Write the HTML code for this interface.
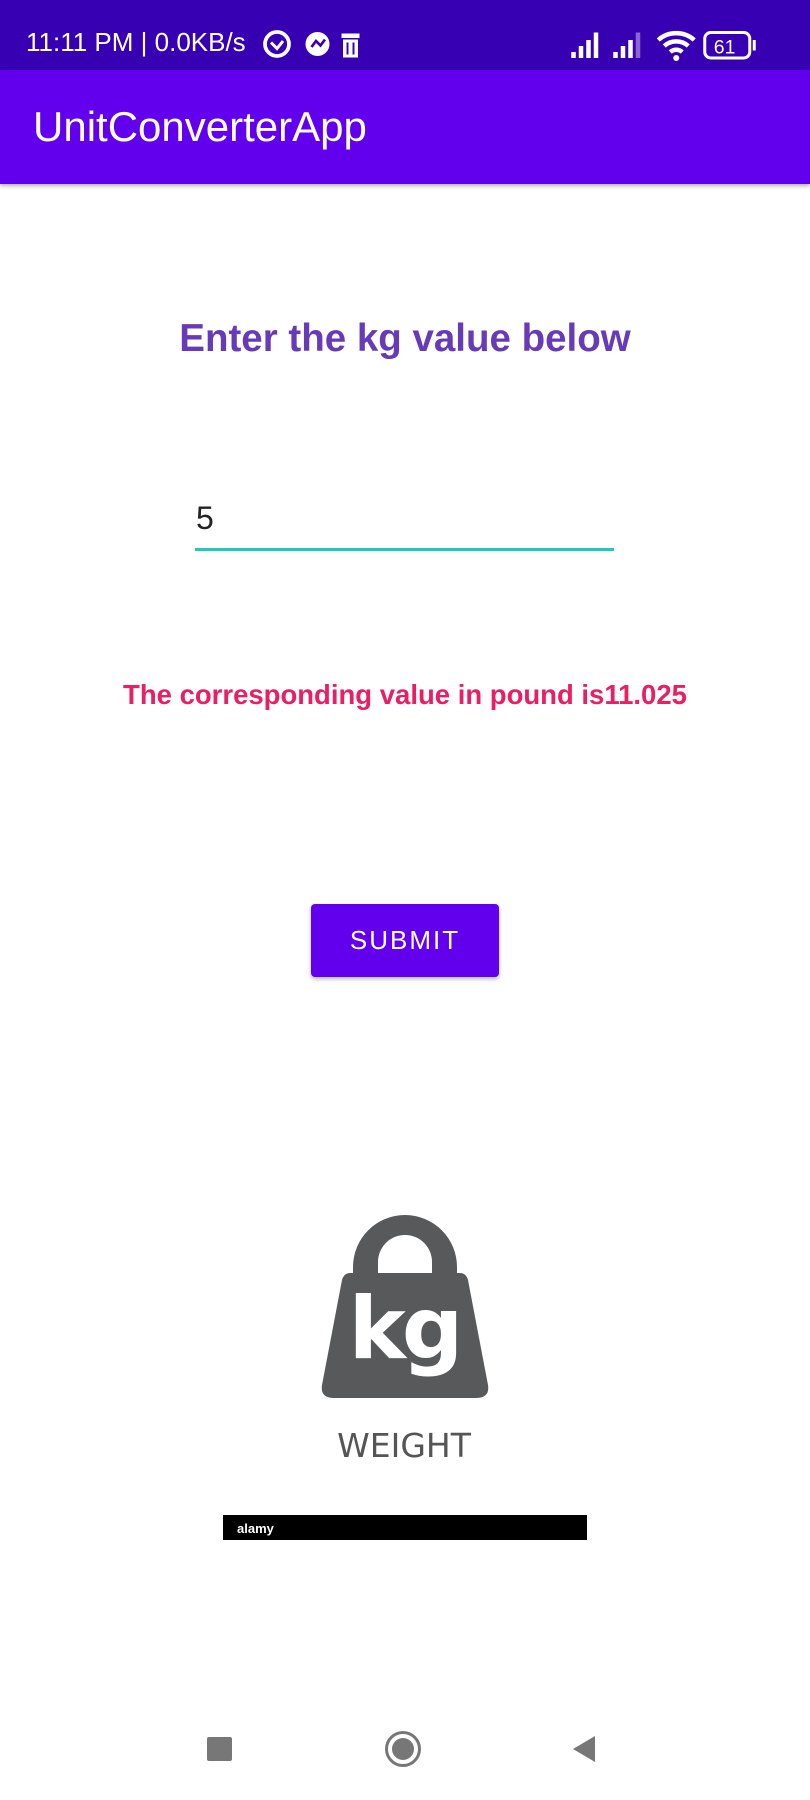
<!DOCTYPE html>
<html><head><meta charset="utf-8"><style>
body{margin:0;width:810px;height:1800px;position:relative;background:#fff;font-family:"Liberation Sans",sans-serif;overflow:hidden}
.a{position:absolute}
</style></head><body>
<div class="a" style="left:0;top:0;width:810px;height:70px;background:#3700b3"></div>
<div class="a" style="left:26px;top:27px;color:#fff;font-size:26px;white-space:nowrap">11:11 PM | 0.0KB/s</div>
<svg class="a" style="left:262px;top:20px" width="105" height="45" viewBox="0 0 70 30">
<circle cx="10" cy="16" r="8" fill="none" stroke="#fff" stroke-width="2.5"/><path d="M6 15l4 4 4-5" stroke="#fff" stroke-width="2" fill="none"/>
<circle cx="37" cy="16" r="8" fill="#fff"/><path d="M33 18l3-4 3 3 3-4" stroke="#3700b3" stroke-width="1.8" fill="none"/>
<rect x="53" y="9" width="12" height="3" fill="#fff"/><rect x="54" y="13" width="10" height="12" fill="#fff"/><path d="M57 15v8M61 15v8" stroke="#3700b3" stroke-width="1.3"/>
</svg>
<svg class="a" style="left:568px;top:22px" width="200" height="45" viewBox="0 0 133 30">
<g fill="#fff"><rect x="2" y="20" width="3" height="4"/><rect x="7" y="16" width="3" height="8"/><rect x="12" y="12" width="3" height="12"/><rect x="17" y="7" width="3" height="17"/>
<rect x="30" y="20" width="3" height="4"/><rect x="35" y="16" width="3" height="8"/><rect x="40" y="12" width="3" height="12"/></g>
<rect x="45" y="7" width="3" height="17" fill="#8866cc"/>
<path d="M60 12a18 18 0 0 1 24 0M64 16a12 12 0 0 1 16 0M68 20a6 6 0 0 1 8 0" stroke="#fff" stroke-width="3" fill="none"/><circle cx="72" cy="24" r="2" fill="#fff"/>
<rect x="91" y="7" width="30" height="17" rx="4" fill="none" stroke="#fff" stroke-width="2"/><rect x="123" y="12" width="2" height="7" fill="#fff"/>
<text x="97" y="21" fill="#fff" font-size="13" font-family="Liberation Sans">61</text>
</svg>
<div class="a" style="left:0;top:70px;width:810px;height:114px;background:#6200ee;box-shadow:0 2px 4px rgba(0,0,0,.3)"></div>
<div class="a" style="left:33px;top:103px;color:#fff;font-size:42px;">UnitConverterApp</div>
<div class="a" style="left:0;width:810px;top:317px;text-align:center;color:#673ab7;font-size:38.5px;font-weight:bold;">Enter the kg value below</div>
<div class="a" style="left:196px;top:500px;color:#222;font-size:32px;">5</div>
<div class="a" style="left:195px;top:548px;width:419px;height:3px;background:#1ccbb9"></div>
<div class="a" style="left:0;width:810px;top:679px;text-align:center;color:#e91e63;font-size:27.5px;font-weight:bold;">The corresponding value in pound is11.025</div>
<div class="a" style="left:311px;top:904px;width:188px;height:73px;background:#6200ee;border-radius:4px;box-shadow:0 2px 4px rgba(0,0,0,.3);color:#fff;font-size:26px;line-height:73px;text-align:center;letter-spacing:2px">SUBMIT</div>
<svg class="a" style="left:0;top:1200px" width="810" height="350" viewBox="0 1200 810 350">
<path d="M353 1278 V1267 A52 52 0 0 1 457 1267 V1278 H432 V1262 A27 27 0 0 0 378 1262 V1278Z" fill="#58595b"/>
<path d="M350 1273 H460 Q466 1273 468 1280 L488 1385 Q490 1398 476 1398 H334 Q320 1398 322 1385 L342 1280 Q344 1273 350 1273Z" fill="#58595b"/>
<text x="404" y="1358" text-anchor="middle" fill="#fff" font-size="86" font-weight="bold" font-family="DejaVu Sans" letter-spacing="-4">kg</text>
<text x="404" y="1457" text-anchor="middle" fill="#555" font-size="33" font-family="DejaVu Sans">WEIGHT</text>
<rect x="223" y="1515" width="364" height="25" fill="#000"/>
<text x="237" y="1533" fill="#fff" font-size="13" font-weight="bold" font-family="Liberation Sans">alamy</text>
</svg>
<div class="a" style="left:207px;top:1737px;width:25px;height:24px;background:#777;border-radius:2px"></div>
<div class="a" style="left:385px;top:1731px;width:30px;height:30px;border:3px solid #777;border-radius:50%"></div>
<div class="a" style="left:392px;top:1738px;width:22px;height:22px;background:#777;border-radius:50%"></div>
<svg class="a" style="left:570px;top:1734px" width="28" height="32"><path d="M3 15 L25 2 V28Z" fill="#777"/></svg>
</body></html>
